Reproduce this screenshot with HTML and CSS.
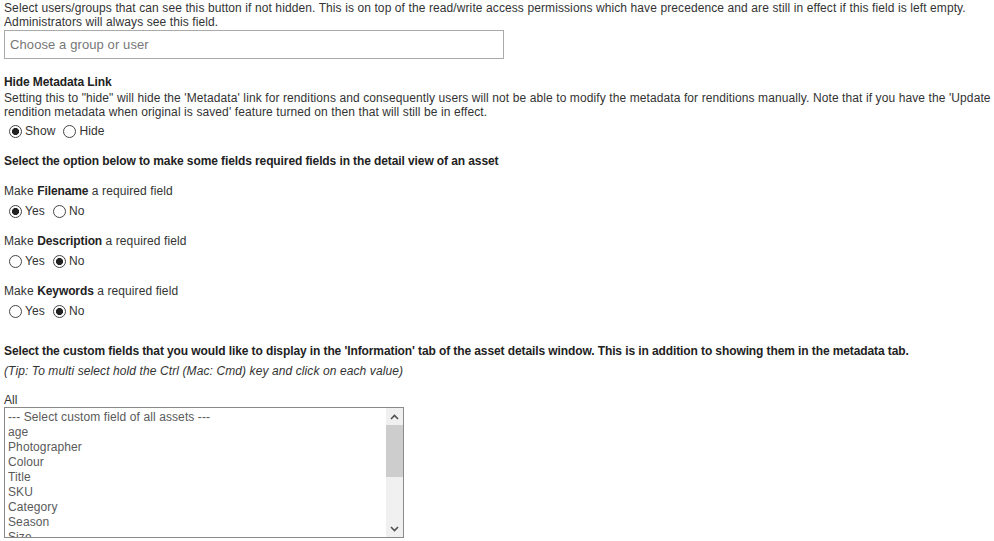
FILE: index.html
```html
<!DOCTYPE html>
<html>
<head>
<meta charset="utf-8">
<link rel="stylesheet" href="styles.css">
</head>
<body>
<div class="page">
  <div class="block first">
    <p class="text">Select users/groups that can see this button if not hidden. This is on top of the read/write access permissions which have precedence and are still in effect if this field is left empty. Administrators will always see this field.</p>
    <div class="chooser">Choose a group or user</div>
  </div>

  <div class="block meta">
    <div class="heading">Hide Metadata Link</div>
    <p class="text desc">Setting this to "hide" will hide the 'Metadata' link for renditions and consequently users will not be able to modify the metadata for renditions manually. Note that if you have the 'Update rendition metadata when original is saved' feature turned on then that will still be in effect.</p>
    <div class="radios">
      <label class="opt"><input type="radio" name="meta" checked>Show</label>
      <label class="opt"><input type="radio" name="meta">Hide</label>
    </div>
  </div>

  <div class="heading req-head">Select the option below to make some fields required fields in the detail view of an asset</div>

  <div class="req">
    <div class="text">Make <b>Filename</b> a required field</div>
    <div class="radios">
      <label class="opt"><input type="radio" name="fn" checked>Yes</label>
      <label class="opt"><input type="radio" name="fn">No</label>
    </div>
  </div>

  <div class="req">
    <div class="text">Make <b>Description</b> a required field</div>
    <div class="radios">
      <label class="opt"><input type="radio" name="ds">Yes</label>
      <label class="opt"><input type="radio" name="ds" checked>No</label>
    </div>
  </div>

  <div class="req">
    <div class="text">Make <b>Keywords</b> a required field</div>
    <div class="radios">
      <label class="opt"><input type="radio" name="kw">Yes</label>
      <label class="opt"><input type="radio" name="kw" checked>No</label>
    </div>
  </div>

  <div class="heading custom-head">Select the custom fields that you would like to display in the 'Information' tab of the asset details window. This is in addition to showing them in the metadata tab.</div>
  <div class="tip">(Tip: To multi select hold the Ctrl (Mac: Cmd) key and click on each value)</div>

  <div class="all">All</div>
  <div class="listbox">
    <div class="options">
      <div class="option">--- Select custom field of all assets ---</div>
      <div class="option">age</div>
      <div class="option">Photographer</div>
      <div class="option">Colour</div>
      <div class="option">Title</div>
      <div class="option">SKU</div>
      <div class="option">Category</div>
      <div class="option">Season</div>
      <div class="option">Size</div>
    </div>
    <div class="scrollbar">
      <div class="arrow">
        <svg width="9" height="6" viewBox="0 0 9 6"><path d="M1 5 L4.5 1.5 L8 5" fill="none" stroke="#505050" stroke-width="1.6"/></svg>
      </div>
      <div class="track">
        <div class="thumb"></div>
      </div>
      <div class="arrow">
        <svg width="9" height="6" viewBox="0 0 9 6"><path d="M1 1 L4.5 4.5 L8 1" fill="none" stroke="#505050" stroke-width="1.6"/></svg>
      </div>
    </div>
  </div>
</div>
</body>
</html>
```

FILE: styles.css
```css
html, body {
  margin: 0;
  padding: 0;
  background: #fff;
}

body {
  font-family: "Liberation Sans", Arial, sans-serif;
  font-size: 12px;
  color: #333;
  letter-spacing: 0.1px;
}

.page {
  padding: 1px 0 0 4px;
}

.text {
  margin: 0;
  line-height: 14px;
}

.text b {
  color: #222;
  letter-spacing: -0.1px;
}

.chooser {
  box-sizing: border-box;
  width: 500px;
  height: 29px;
  margin-top: 1px;
  border: 1px solid #aaa;
  padding: 0 5px;
  line-height: 27px;
  font-size: 13px;
  letter-spacing: 0.1px;
  color: #777;
}

.block.meta {
  margin-top: 16px;
}

.heading {
  font-weight: bold;
  color: #222;
  line-height: 14px;
  letter-spacing: -0.1px;
}

.desc {
  margin-top: 2px;
}

.radios {
  display: flex;
  align-items: center;
  height: 20px;
  margin-top: 3px;
}

.meta .radios {
  margin-top: 2px;
}

.opt {
  display: flex;
  align-items: center;
  margin-right: 3px;
}

.opt input {
  appearance: none;
  -webkit-appearance: none;
  box-sizing: border-box;
  width: 13px;
  height: 13px;
  margin: 0 3px 0 5px;
  border: 1px solid #444;
  border-radius: 50%;
  background: #fff;
}

.opt input:checked {
  background: radial-gradient(circle, #222 0 3.3px, #fff 3.8px);
}

.req-head {
  margin-top: 13px;
}

.req {
  margin-top: 16px;
}

.req + .req {
  margin-top: 13px;
}

.custom-head {
  margin-top: 23px;
}

.tip {
  font-style: italic;
  line-height: 14px;
  margin-top: 6px;
}

.all {
  margin-top: 15px;
  line-height: 14px;
}

.listbox {
  display: flex;
  box-sizing: border-box;
  width: 400px;
  height: 131px;
  border: 1px solid #8a8a8a;
  overflow: hidden;
}

.options {
  flex: 1;
  overflow: hidden;
  padding: 2px 3px 0 3px;
}

.option {
  line-height: 15px;
  color: #5a5a5a;
  white-space: nowrap;
}

.scrollbar {
  width: 17px;
  display: flex;
  flex-direction: column;
  background: #f0f0f0;
}

.arrow {
  height: 17px;
  display: flex;
  align-items: center;
  justify-content: center;
}

.track {
  flex: 1;
}

.thumb {
  height: 52px;
  background: #cdcdcd;
}
```
